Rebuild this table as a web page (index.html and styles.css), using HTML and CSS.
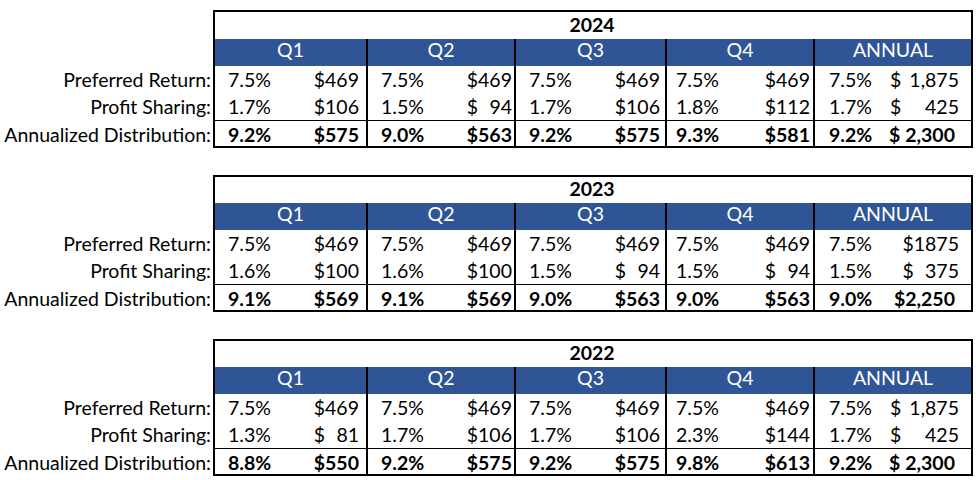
FILE: index.html
```html
<!DOCTYPE html>
<html lang="en">
<head>
<meta charset="utf-8">
<title>Distributions</title>
<link rel="stylesheet" href="styles.css">
</head>
<body>
<main class="page">

  <section class="sheet">
    <div class="row year-row"><div class="label"></div><div class="year">2024</div></div>
    <div class="row head"><div class="label"></div><div class="h c1">Q1</div><div class="h c2">Q2</div><div class="h c3">Q3</div><div class="h c4">Q4</div><div class="h c5">ANNUAL</div></div>
    <div class="row r1"><div class="label">Preferred Return:</div>
      <div class="d c1"><span>7.5%</span><span>$469</span></div>
      <div class="d c2"><span>7.5%</span><span>$469</span></div>
      <div class="d c3"><span>7.5%</span><span>$469</span></div>
      <div class="d c4"><span>7.5%</span><span>$469</span></div>
      <div class="d c5"><span>7.5%</span><span class="acct"><span>$</span><span>1,875</span></span></div>
    </div>
    <div class="row r2"><div class="label">Profit Sharing:</div>
      <div class="d c1"><span>1.7%</span><span>$106</span></div>
      <div class="d c2"><span>1.5%</span><span>$<span class="n3">94</span></span></div>
      <div class="d c3"><span>1.7%</span><span>$106</span></div>
      <div class="d c4"><span>1.8%</span><span>$112</span></div>
      <div class="d c5"><span>1.7%</span><span class="acct"><span>$</span><span>425</span></span></div>
    </div>
    <div class="row r3"><div class="label">Annualized Distribution:</div>
      <div class="d c1"><span>9.2%</span><span>$575</span></div>
      <div class="d c2"><span>9.0%</span><span>$563</span></div>
      <div class="d c3"><span>9.2%</span><span>$575</span></div>
      <div class="d c4"><span>9.3%</span><span>$581</span></div>
      <div class="d c5"><span>9.2%</span><span class="acct"><span>$</span><span>2,300</span></span></div>
    </div>
  </section>

  <section class="sheet">
    <div class="row year-row"><div class="label"></div><div class="year">2023</div></div>
    <div class="row head"><div class="label"></div><div class="h c1">Q1</div><div class="h c2">Q2</div><div class="h c3">Q3</div><div class="h c4">Q4</div><div class="h c5">ANNUAL</div></div>
    <div class="row r1"><div class="label">Preferred Return:</div>
      <div class="d c1"><span>7.5%</span><span>$469</span></div>
      <div class="d c2"><span>7.5%</span><span>$469</span></div>
      <div class="d c3"><span>7.5%</span><span>$469</span></div>
      <div class="d c4"><span>7.5%</span><span>$469</span></div>
      <div class="d c5"><span>7.5%</span><span>$1875</span></div>
    </div>
    <div class="row r2"><div class="label">Profit Sharing:</div>
      <div class="d c1"><span>1.6%</span><span>$100</span></div>
      <div class="d c2"><span>1.6%</span><span>$100</span></div>
      <div class="d c3"><span>1.5%</span><span>$<span class="n3">94</span></span></div>
      <div class="d c4"><span>1.5%</span><span>$<span class="n3">94</span></span></div>
      <div class="d c5"><span>1.5%</span><span>$<span class="n4">375</span></span></div>
    </div>
    <div class="row r3"><div class="label">Annualized Distribution:</div>
      <div class="d c1"><span>9.1%</span><span>$569</span></div>
      <div class="d c2"><span>9.1%</span><span>$569</span></div>
      <div class="d c3"><span>9.0%</span><span>$563</span></div>
      <div class="d c4"><span>9.0%</span><span>$563</span></div>
      <div class="d c5"><span>9.0%</span><span>$2,250</span></div>
    </div>
  </section>

  <section class="sheet">
    <div class="row year-row"><div class="label"></div><div class="year">2022</div></div>
    <div class="row head"><div class="label"></div><div class="h c1">Q1</div><div class="h c2">Q2</div><div class="h c3">Q3</div><div class="h c4">Q4</div><div class="h c5">ANNUAL</div></div>
    <div class="row r1"><div class="label">Preferred Return:</div>
      <div class="d c1"><span>7.5%</span><span>$469</span></div>
      <div class="d c2"><span>7.5%</span><span>$469</span></div>
      <div class="d c3"><span>7.5%</span><span>$469</span></div>
      <div class="d c4"><span>7.5%</span><span>$469</span></div>
      <div class="d c5"><span>7.5%</span><span class="acct"><span>$</span><span>1,875</span></span></div>
    </div>
    <div class="row r2"><div class="label">Profit Sharing:</div>
      <div class="d c1"><span>1.3%</span><span>$<span class="n3">81</span></span></div>
      <div class="d c2"><span>1.7%</span><span>$106</span></div>
      <div class="d c3"><span>1.7%</span><span>$106</span></div>
      <div class="d c4"><span>2.3%</span><span>$144</span></div>
      <div class="d c5"><span>1.7%</span><span class="acct"><span>$</span><span>425</span></span></div>
    </div>
    <div class="row r3"><div class="label">Annualized Distribution:</div>
      <div class="d c1"><span>8.8%</span><span>$550</span></div>
      <div class="d c2"><span>9.2%</span><span>$575</span></div>
      <div class="d c3"><span>9.2%</span><span>$575</span></div>
      <div class="d c4"><span>9.8%</span><span>$613</span></div>
      <div class="d c5"><span>9.2%</span><span class="acct"><span>$</span><span>2,300</span></span></div>
    </div>
  </section>

</main>
</body>
</html>
```

FILE: styles.css
```css
* { box-sizing: border-box; }

html, body {
  margin: 0;
  padding: 0;
  background: #ffffff;
}

body {
  font-family: "Lato", "Carlito", "Liberation Sans", sans-serif;
  font-size: 19.5px;
  color: #000000;
  font-variant-numeric: tabular-nums lining-nums;
}

.page {
  display: flex;
  flex-direction: column;
  gap: 27px;
  padding-top: 10px;
}

.sheet {
  display: flex;
  flex-direction: column;
}

.row {
  display: flex;
  height: 27px;
}

.row > * {
  display: flex;
  align-items: flex-end;
  line-height: 20px;
  white-space: nowrap;
}

.label {
  width: 213px;
  justify-content: flex-end;
  padding-right: 2px;
}

/* year title row */
.year-row { height: 28px; }
.sheet:first-child .year-row { height: 29px; }

.year {
  width: 760px;
  justify-content: center;
  font-weight: 700;
  border: 2px solid #000;
  border-bottom: 0;
  padding-bottom: 4px;
  padding-right: 2px;
}

/* column widths (include the 2px left rule) */
.c1 { width: 153px; }
.c2 { width: 148px; }
.c3 { width: 151px; }
.c4 { width: 148px; }
.c5 { width: 160px; border-right: 2px solid #000; }

.h, .d { border-left: 2px solid #000; }

/* blue quarter header */
.head > * { padding-bottom: 6px; }

.h {
  background: #2f5597;
  color: #ffffff;
  justify-content: center;
}

/* data cells */
.d { justify-content: space-between; }

.r1 > *, .r2 > * { padding-bottom: 3px; }

.d.c1 { padding-left: 13px; padding-right: 7px; }
.d.c2 { padding-left: 13px; padding-right: 2px; }
.d.c3 { padding-left: 13px; padding-right: 5px; }
.d.c4 { padding-left: 9px;  padding-right: 3px; }
.d.c5 { padding-left: 14px; padding-right: 12px; }

.r3 { height: 28px; }
.r3 > * { padding-bottom: 1px; font-weight: 700; }
.r3 > .label { font-weight: 400; padding-bottom: 3px; }
.r3 .d { border-top: 1px solid #000; border-bottom: 2px solid #000; }
.r3 .d.c5 { padding-right: 16px; }

.n3, .n4 {
  display: inline-block;
  text-align: right;
}
.n3 { min-width: 3ch; }
.n4 { min-width: 4ch; }

.acct {
  display: flex;
  justify-content: space-between;
  width: 69px;
}
.r3 .acct { width: 66px; }
```
